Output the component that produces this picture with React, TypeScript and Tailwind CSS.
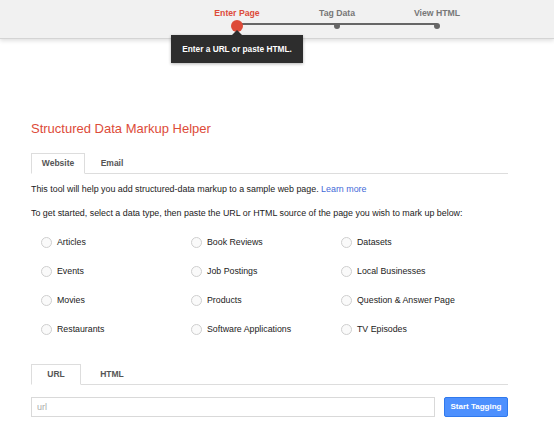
import { useState } from "react";

const types = [
  ["Articles", "Book Reviews", "Datasets"],
  ["Events", "Job Postings", "Local Businesses"],
  ["Movies", "Products", "Question & Answer Page"],
  ["Restaurants", "Software Applications", "TV Episodes"],
];

function Stepper() {
  const steps = ["Enter Page", "Tag Data", "View HTML"];
  return (
    <div className="relative ml-[187px] flex w-[300px] pt-[7px]">
      <div className="absolute left-[50px] top-[23px] h-[2px] w-[200px] bg-[#666]" />
      {steps.map((s, i) => (
        <div key={s} className="flex w-[100px] flex-col items-center">
          <span className={`text-[8.7px] font-bold leading-[12px] ${i === 0 ? "text-[#dd4b39]" : "text-[#777]"}`}>{s}</span>
          <div className="flex h-[13px] items-center">
            {i === 0 ? (
              <span className="relative z-10 block h-[12px] w-[12px] rounded-full bg-[#dd4b39]" />
            ) : (
              <span className="relative z-10 block h-[6px] w-[6px] rounded-full bg-[#666]" />
            )}
          </div>
        </div>
      ))}
    </div>
  );
}

function Tabs({
  items,
  widths,
  active,
  onChange,
}: {
  items: string[];
  widths: string[];
  active: number;
  onChange: (i: number) => void;
}) {
  return (
    <div className="flex border-b border-[#ddd]">
      {items.map((t, i) => (
        <button
          key={t}
          onClick={() => onChange(i)}
          className={`-mb-px h-[21px] text-[8.5px] font-bold text-[#555] ${widths[i]} ${
            i === active ? "border border-b-white border-[#ddd] bg-white" : "border border-transparent"
          }`}
        >
          {t}
        </button>
      ))}
    </div>
  );
}

export default function App() {
  const [siteTab, setSiteTab] = useState(0);
  const [srcTab, setSrcTab] = useState(0);
  const [picked, setPicked] = useState<string | null>(null);

  return (
    <div className="min-h-[431px] bg-white font-['Liberation_Sans',Arial,sans-serif] text-[#222]">
      <header className="relative h-[39px] border-b border-[#d4d4d4] bg-[#f1f1f1] shadow-[0_2px_4px_rgba(0,0,0,0.12)]">
        <Stepper />
        <div className="absolute left-[171px] top-[35px] z-20 flex h-[28px] w-[132px] items-center justify-center bg-[#2d2d2d] text-[8.3px] font-bold text-white shadow-[0_1px_3px_rgba(0,0,0,0.3)]">
          <span className="absolute left-[61px] top-[-5px] h-0 w-0 border-x-[5px] border-b-[5px] border-x-transparent border-b-[#2d2d2d]" />
          Enter a URL or paste HTML.
        </div>
      </header>

      <main className="ml-[31px] w-[477px] pt-[81px]">
        <h1 className="text-[13px] leading-[18px] text-[#dd4b39]">Structured Data Markup Helper</h1>

        <div className="mt-[15px]">
          <Tabs items={["Website", "Email"]} widths={["w-[54px]", "w-[54px]"]} active={siteTab} onChange={setSiteTab} />
        </div>

        <p className="mt-[9px] text-[8.9px] leading-[13px]">
          This tool will help you add structured-data markup to a sample web page.{" "}
          <a href="#" className="text-[#3f6ad8]">Learn more</a>
        </p>
        <p className="mt-[11px] whitespace-nowrap text-[8.9px] leading-[13px]">
          To get started, select a data type, then paste the URL or HTML source of the page you wish to mark up below:
        </p>

        <div className="ml-[10px] mt-[16px] grid grid-cols-[150px_150px_150px] gap-y-[16px]">
          {types.flat().map((t) => (
            <label key={t} className="flex h-[13px] cursor-pointer items-center gap-[5px] text-[8.8px]">
              <input
                type="radio"
                name="type"
                checked={picked === t}
                onChange={() => setPicked(t)}
                className="h-[11px] w-[11px] appearance-none rounded-full border border-[#cfcfcf] bg-[#fafafa] checked:border-[#4d90fe] checked:bg-[#4d90fe]"
              />
              {t}
            </label>
          ))}
        </div>

        <div className="mt-[28px]">
          <Tabs items={["URL", "HTML"]} widths={["w-[50px]", "w-[62px]"]} active={srcTab} onChange={setSrcTab} />
        </div>

        <div className="mt-[12px] flex items-center gap-[9px]">
          <input
            placeholder="url"
            className="h-[20px] flex-1 border border-[#d9d9d9] px-[5px] text-[9px] outline-none placeholder:text-[#aaa]"
          />
          <button className="h-[20px] w-[64px] rounded-[2px] border border-[#3079ed] bg-[#4d90fe] text-[8px] font-bold text-white">
            Start Tagging
          </button>
        </div>
      </main>
    </div>
  );
}
